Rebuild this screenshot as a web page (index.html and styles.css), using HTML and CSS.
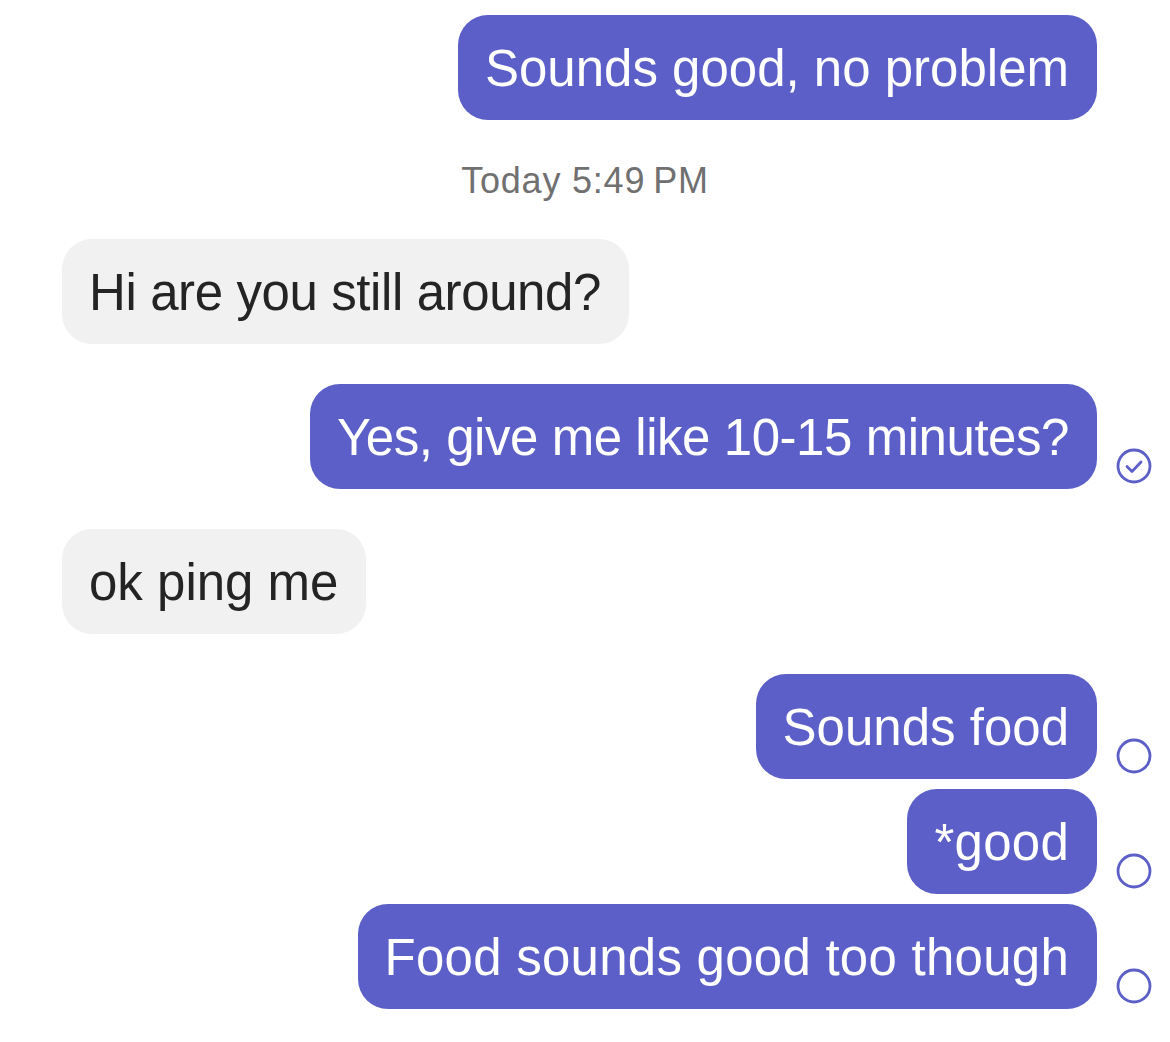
FILE: index.html
```html
<!DOCTYPE html>
<html lang="en">
<head>
  <meta charset="UTF-8" />
  <meta name="viewport" content="width=device-width, initial-scale=1" />
  <title>Chat</title>
  <link rel="stylesheet" href="styles.css">
</head>
<body>
  <div class="chat">
    <div class="row out">
      <div class="bubble">Sounds good, no problem</div>
      <div class="status"></div>
    </div>

    <div class="stamp">Today 5:49&#8239;PM</div>

    <div class="row in">
      <div class="bubble tight">Hi are you still around?</div>
    </div>

    <div class="row out gap-big">
      <div class="bubble tighter">Yes, give me like 10-15 minutes?</div>
      <div class="status">
        <svg class="icon" viewBox="0 0 36 36" aria-label="Seen">
          <circle cx="18" cy="18" r="16" />
          <path d="M11 18.5 L16 23.5 L25 14" />
        </svg>
      </div>
    </div>

    <div class="row in gap-big">
      <div class="bubble">ok ping me</div>
    </div>

    <div class="row out gap-big">
      <div class="bubble">Sounds food</div>
      <div class="status">
        <svg class="icon" viewBox="0 0 36 36" aria-label="Sent"><circle cx="18" cy="18" r="16" /></svg>
      </div>
    </div>

    <div class="row out">
      <div class="bubble loose">*good</div>
      <div class="status">
        <svg class="icon" viewBox="0 0 36 36" aria-label="Sent"><circle cx="18" cy="18" r="16" /></svg>
      </div>
    </div>

    <div class="row out">
      <div class="bubble loose">Food sounds good too though</div>
      <div class="status">
        <svg class="icon" viewBox="0 0 36 36" aria-label="Sent"><circle cx="18" cy="18" r="16" /></svg>
      </div>
    </div>
  </div>
</body>
</html>
```

FILE: styles.css
```css
:root {
  --purple: #5b5fc7;
  --bubble-gray: #f1f1f1;
  --text: #242424;
  --stamp: #707070;
  --white: #ffffff;
}
body {
  margin: 0;
  background: var(--white);
  font-family: 'Liberation Sans', Arial, sans-serif;
  color: var(--text);
}
.chat {
  display: flex;
  flex-direction: column;
  gap: 10px;
  padding: 15px 0 0 62px;
}
.row {
  display: flex;
}
.row.out {
  justify-content: flex-end;
}
.row.in {
  justify-content: flex-start;
}
.gap-big {
  margin-top: 30px;
}
.bubble {
  font-size: 51px;
  line-height: 61px;
  padding: 23px 28px 21px 27px;
  border-radius: 30px;
  white-space: nowrap;
}
/* nudge widths toward the original system font */
.bubble.tight {
  letter-spacing: -0.4px;
}
.bubble.tighter {
  letter-spacing: -0.45px;
}
.bubble.loose {
  letter-spacing: 0.25px;
}
.out .bubble {
  background: var(--purple);
  color: var(--white);
}
.in .bubble {
  background: var(--bubble-gray);
  color: var(--text);
}
.status {
  width: 73px;
  flex-shrink: 0;
  display: flex;
  align-items: flex-end;
  padding-left: 19px;
  padding-bottom: 5px;
  box-sizing: border-box;
}
.icon {
  width: 36px;
  height: 36px;
  fill: none;
  stroke: var(--purple);
  stroke-width: 2.8;
  stroke-linecap: round;
  stroke-linejoin: round;
}
.stamp {
  margin: 29px 0 26px -62px;
  text-align: center;
  font-size: 36px;
  line-height: 44px;
  letter-spacing: 0.8px;
  color: var(--stamp);
}
```
